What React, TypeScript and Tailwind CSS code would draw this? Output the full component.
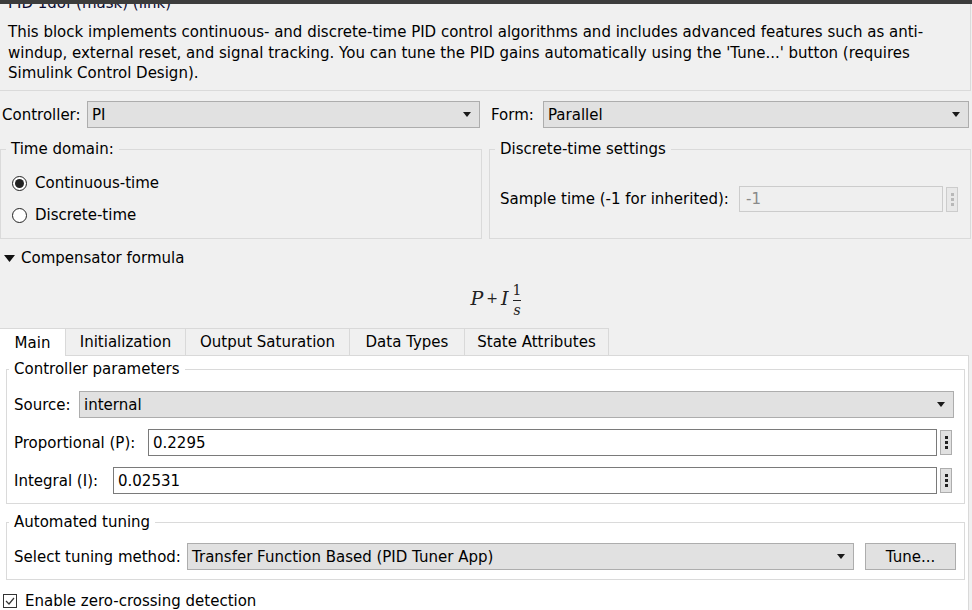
import React from 'react'

const Arrow = () => (
  <svg width="8" height="5" viewBox="0 0 8 5" className="shrink-0">
    <path d="M0 0h8L4 5z" fill="#1a1a1a" />
  </svg>
)

const Select: React.FC<{ value: string; className?: string }> = ({ value, className }) => (
  <div
    className={`flex h-[27px] items-center justify-between border border-[#adadad] bg-[#e1e1e1] pl-[4px] pr-[8px] ${className ?? ''}`}
  >
    <span>{value}</span>
    <Arrow />
  </div>
)

const Dots: React.FC<{ disabled?: boolean }> = ({ disabled }) => (
  <div
    className={`ml-[3px] flex h-[25px] w-[12px] shrink-0 flex-col items-center justify-center gap-[2px] border ${
      disabled ? 'border-[#cccccc] bg-[#e8e8e8]' : 'border-[#adadad] bg-[#e1e1e1]'
    }`}
  >
    {[0, 1, 2].map((i) => (
      <span key={i} className={`h-[3px] w-[3px] ${disabled ? 'bg-[#b8b8b8]' : 'bg-[#222]'}`} />
    ))}
  </div>
)

const Field: React.FC<{ value: string; className?: string }> = ({ value, className }) => (
  <div className={`flex h-[27px] items-center border border-[#7a7a7a] bg-white pl-[4px] ${className ?? ''}`}>
    {value}
  </div>
)

const Radio: React.FC<{ checked?: boolean; label: string }> = ({ checked, label }) => (
  <div className="flex h-[22px] items-center">
    <span className="ml-[11px] flex h-[15px] w-[15px] items-center justify-center rounded-full border border-[#222] bg-white">
      {checked && <span className="h-[9px] w-[9px] rounded-full bg-[#222]" />}
    </span>
    <span className="ml-[8px]">{label}</span>
  </div>
)

const tabs = ['Main', 'Initialization', 'Output Saturation', 'Data Types', 'State Attributes']
const tabW = ['w-[66px]', 'w-[120px]', 'w-[164px]', 'w-[115px]', 'w-[144px]']

export default function App() {
  return (
    <div className="h-[610px] w-[972px] overflow-hidden bg-[#f0f0f0] font-['DejaVu_Sans',sans-serif] text-[15px] leading-[20px] text-black">
      <div className="relative z-10 h-[4px] bg-[#3c3c3c]" />

      {/* description */}
      <div className="h-[87px] w-[971px] overflow-hidden border-r border-b border-[#dadada]">
        <div className="-mt-[11px] pl-[8px] text-[#0a0a30]">PID 1dof (mask) (link)</div>
        <div className="mt-[9px] pl-[8px] leading-[20.5px]">
          This block implements continuous- and discrete-time PID control algorithms and includes advanced features such as anti-
          <br />
          windup, external reset, and signal tracking. You can tune the PID gains automatically using the 'Tune...' button (requires
          <br />
          Simulink Control Design).
        </div>
      </div>

      {/* controller / form */}
      <div className="mt-[10px] flex items-center">
        <span className="w-[87px] pl-[2px]">Controller:</span>
        <Select value="PI" className="w-[393px]" />
        <span className="ml-[11px] w-[52px]">Form:</span>
        <Select value="Parallel" className="w-[426px]" />
      </div>

      {/* group boxes */}
      <div className="mt-[11px] flex gap-[7px]">
        <fieldset className="h-[100px] w-[482px] border border-[#dadada] px-0">
          <legend className="ml-[5px] px-[5px]">Time domain:</legend>
          <div className="mt-[13px]">
            <Radio checked label="Continuous-time" />
            <div className="h-[10px]" />
            <Radio label="Discrete-time" />
          </div>
        </fieldset>
        <fieldset className="h-[100px] w-[482px] border border-[#dadada]">
          <legend className="ml-[5px] px-[5px]">Discrete-time settings</legend>
          <div className="mt-[27px] flex items-center pl-[10px]">
            <span className="w-[239px]">Sample time (-1 for inherited):</span>
            <div className="flex h-[26px] w-[204px] items-center border border-[#cccccc] bg-[#efefef] pl-[6px] text-[#8a8a8a]">
              -1
            </div>
            <Dots disabled />
          </div>
        </fieldset>
      </div>

      {/* compensator formula */}
      <div className="mt-[9px] flex items-center">
        <svg width="11" height="7" viewBox="0 0 11 7" className="ml-[4px]">
          <path d="M0 0h11L5.5 7z" fill="#111" />
        </svg>
        <span className="ml-[6px]">Compensator formula</span>
      </div>
      <div className="flex h-[60px] items-center justify-center pl-[20px] font-['DejaVu_Serif',serif] text-[#222]">
        <span className="text-[19px] italic">P</span>
        <span className="mx-[3px] text-[14px]">+</span>
        <span className="text-[19px] italic">I</span>
        <span className="ml-[4px] mt-[4px] flex flex-col items-center text-[14px] leading-[15px]">
          <span>1</span>
          <span className="my-[2px] h-px w-[8px] bg-[#222]" />
          <span className="italic">s</span>
        </span>
      </div>

      {/* tabs */}
      <div className="flex h-[27px]">
        {tabs.map((t, i) => (
          <div
            key={t}
            className={`flex items-center justify-center border-t border-r border-[#d9d9d9] ${tabW[i]} ${
              i === 0 ? 'h-[28px] bg-white' : 'h-[27px] bg-[#f0f0f0]'
            }`}
          >
            {t}
          </div>
        ))}
      </div>

      {/* tab panel */}
      <div className="h-[256px] w-[969px] border-t border-r border-[#d9d9d9] bg-white pt-[3px]">
        <fieldset className="ml-[6px] w-[959px] border border-[#dadada] pb-[9px]">
          <legend className="ml-[2px] px-[5px]">Controller parameters</legend>
          <div className="mt-[12px] flex items-center pl-[7px]">
            <span className="w-[65px]">Source:</span>
            <Select value="internal" className="w-[875px]" />
          </div>
          <div className="mt-[11px] flex items-center pl-[7px]">
            <span className="w-[134px]">Proportional (P):</span>
            <Field value="0.2295" className="w-[789px]" />
            <Dots />
          </div>
          <div className="mt-[11px] flex items-center pl-[7px]">
            <span className="w-[99px]">Integral (I):</span>
            <Field value="0.02531" className="w-[824px]" />
            <Dots />
          </div>
        </fieldset>

        <fieldset className="ml-[6px] mt-[8px] w-[959px] border border-[#dadada] pb-[9px]">
          <legend className="ml-[2px] px-[5px]">Automated tuning</legend>
          <div className="mt-[11px] flex items-center pl-[7px]">
            <span className="w-[173px]">Select tuning method:</span>
            <Select value="Transfer Function Based (PID Tuner App)" className="w-[667px]" />
            <div className="ml-[11px] flex h-[27px] w-[91px] items-center justify-center border border-[#adadad] bg-[#e1e1e1]">
              Tune...
            </div>
          </div>
        </fieldset>

        <div className="mt-[11px] flex items-center">
          <span className="ml-[3px] flex h-[14px] w-[14px] items-center justify-center border border-[#333] bg-white">
            <svg width="10" height="8" viewBox="0 0 10 8">
              <path d="M1 4l3 3 5-6" fill="none" stroke="#333" strokeWidth="1.2" />
            </svg>
          </span>
          <span className="ml-[8px]">Enable zero-crossing detection</span>
        </div>
      </div>
    </div>
  )
}
